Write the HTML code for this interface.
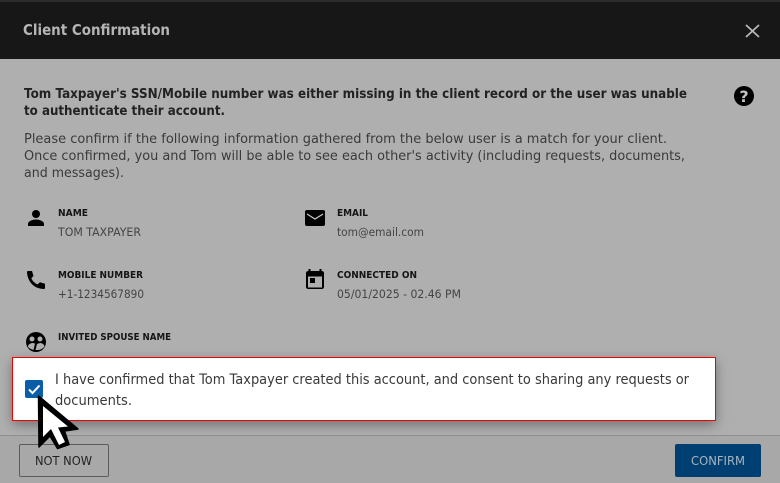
<!DOCTYPE html>
<html><head><meta charset="utf-8">
<style>
html,body{margin:0;padding:0;background:#afafaf}
svg{display:block}
text{font-family:"DejaVu Sans",sans-serif}
.h{font-size:13.5px;font-weight:700;fill:#222}
.p{font-size:13.5px;fill:#3a3a3a}
.l{font-size:9.500px;font-weight:700;fill:#151515}
.v{font-size:11.500px;fill:#444}
.c{font-size:14px;fill:#3a3a3a}
</style></head>
<body>
<svg width="780" height="483" viewBox="0 0 780 483" xmlns="http://www.w3.org/2000/svg">
<defs>
<filter id="s" x="-5%" y="-30%" width="110%" height="160%"><feDropShadow dx="0" dy="4" stdDeviation="6" flood-color="#000" flood-opacity=".35"/></filter>
</defs>
<rect width="780" height="483" fill="#afafaf"/>
<rect width="780" height="59" fill="#171717"/>
<rect width="780" height="2" fill="#2c2c2c"/>
<text x="23" y="35" font-size="15" font-weight="700" fill="#b5b5b5" textLength="147" lengthAdjust="spacingAndGlyphs">Client Confirmation</text>
<path d="M746 25 L759 37 M759 25 L746 37" stroke="#b8b8b8" stroke-width="1.800" fill="none"/>

<text class="h" x="24" y="98" textLength="663" lengthAdjust="spacingAndGlyphs">Tom Taxpayer's SSN/Mobile number was either missing in the client record or the user was unable</text>
<text class="h" x="24" y="115" textLength="201" lengthAdjust="spacingAndGlyphs">to authenticate their account.</text>
<text class="p" x="24" y="143" textLength="643" lengthAdjust="spacingAndGlyphs">Please confirm if the following information gathered from the below user is a match for your client.</text>
<text class="p" x="24" y="160" textLength="661" lengthAdjust="spacingAndGlyphs">Once confirmed, you and Tom will be able to see each other's activity (including requests, documents,</text>
<text class="p" x="24" y="177" textLength="100" lengthAdjust="spacingAndGlyphs">and messages).</text>

<circle cx="744" cy="96" r="10" fill="#000"/>
<text x="744" y="102" text-anchor="middle" font-size="16" font-weight="700" fill="#c4c4c4">?</text>

<!-- person -->
<circle cx="36" cy="214" r="4" fill="#000"/>
<path d="M28 226 v-2 c0-3 5-4.500 8-4.500 s8 1.500 8 4.500 v2z" fill="#000"/>
<text class="l" x="58" y="216" textLength="30" lengthAdjust="spacingAndGlyphs">NAME</text>
<text class="v" x="58" y="236" textLength="83" lengthAdjust="spacingAndGlyphs">TOM TAXPAYER</text>

<!-- email -->
<rect x="305" y="210" width="20" height="16" rx="2" fill="#000"/>
<path d="M307 214 L315 219 L323 214" stroke="#c8c8c8" stroke-width="1.200" fill="none"/>
<text class="l" x="337" y="216" textLength="31" lengthAdjust="spacingAndGlyphs">EMAIL</text>
<text class="v" x="337" y="236" textLength="87" lengthAdjust="spacingAndGlyphs">tom@email.com</text>

<!-- phone -->
<path d="M28 271 h4 l1.500 5 -2.200 2.200 c1.200 2.700 3.500 5 6.200 6.200 l2.500-2.200 5 1.500 v4.300 c0 .6-.4 1-1 1 C34.500 289 27.500 282 27 272 c0-.6.4-1 1-1z" fill="#000"/>
<text class="l" x="58" y="278" textLength="85" lengthAdjust="spacingAndGlyphs">MOBILE NUMBER</text>
<text class="v" x="58" y="298" textLength="86" lengthAdjust="spacingAndGlyphs">+1-1234567890</text>

<!-- calendar -->
<path d="M308.500 269 h2 v2 h9 v-2 h2 v2 h.5 c1 0 2 1 2 2 v14 c0 1-1 2-2 2 h-14 c-1 0-2-1-2-2 v-14 c0-1 1-2 2-2 h.5z" fill="#000"/>
<rect x="308" y="276.500" width="14" height="11" fill="#afafaf"/>
<rect x="310" y="278" width="5" height="5" fill="#000"/>
<text class="l" x="337" y="278" textLength="80" lengthAdjust="spacingAndGlyphs">CONNECTED ON</text>
<text class="v" x="337" y="298" textLength="124" lengthAdjust="spacingAndGlyphs">05/01/2025 - 02.46 PM</text>

<!-- spouse -->
<circle cx="36" cy="342" r="10" fill="#000"/>
<circle cx="32" cy="339" r="2.500" fill="#afafaf"/>
<circle cx="40" cy="339" r="2.500" fill="#afafaf"/>
<path d="M28 347 c0-3 3-4 5-4 l2 .5 -1.500 6.500 c-2-.5-4-1.500-5.500-3z M37 344 l3-1 c2 0 4 1 4.500 3.500 c-1.500 2-4 3.500-6.500 3.500 h-2.500z" fill="#afafaf"/>
<text class="l" x="58" y="340" textLength="113" lengthAdjust="spacingAndGlyphs">INVITED SPOUSE NAME</text>

<!-- footer -->
<rect x="0" y="435" width="780" height="48" fill="#a8a8a8"/>
<rect x="0" y="435" width="780" height="1" fill="#8f8f8f"/>
<rect x="19.500" y="444.500" width="89" height="32" rx="1.500" fill="none" stroke="#5c5c5c"/>
<text x="35" y="465" font-size="12" fill="#222" textLength="57" lengthAdjust="spacingAndGlyphs">NOT NOW</text>
<rect x="675" y="444" width="86" height="33" rx="2" fill="#003f72"/>
<text x="691" y="465" font-size="12" fill="#a7b4bf" textLength="54" lengthAdjust="spacingAndGlyphs">CONFIRM</text>

<!-- highlighted box -->
<rect x="12.500" y="357.500" width="703" height="63" fill="#fff" stroke="#ee0000" filter="url(#s)"/>
<rect x="25" y="380" width="18" height="18" rx="2" fill="#0a5ea8"/>
<path d="M29 389.500 L32.500 393 L39.500 385.500" stroke="#fff" stroke-width="2" fill="none"/>
<text class="c" x="55" y="384" textLength="634" lengthAdjust="spacingAndGlyphs">I have confirmed that Tom Taxpayer created this account, and consent to sharing any requests or</text>
<text class="c" x="55" y="405" textLength="77" lengthAdjust="spacingAndGlyphs">documents.</text>

<!-- cursor -->
<path d="M38.500 396 L78 429 L64.500 431 L69 444.500 L57.500 448.500 L50 436 L39 447 Z" fill="#000" stroke="#000" stroke-width="1.500" stroke-linejoin="round"/>
<path d="M43 406 L68 426.500 L58 427.500 L65 442 L59 445 L51 429 L43 437 Z" fill="#fff"/>
</svg>
</body></html>
